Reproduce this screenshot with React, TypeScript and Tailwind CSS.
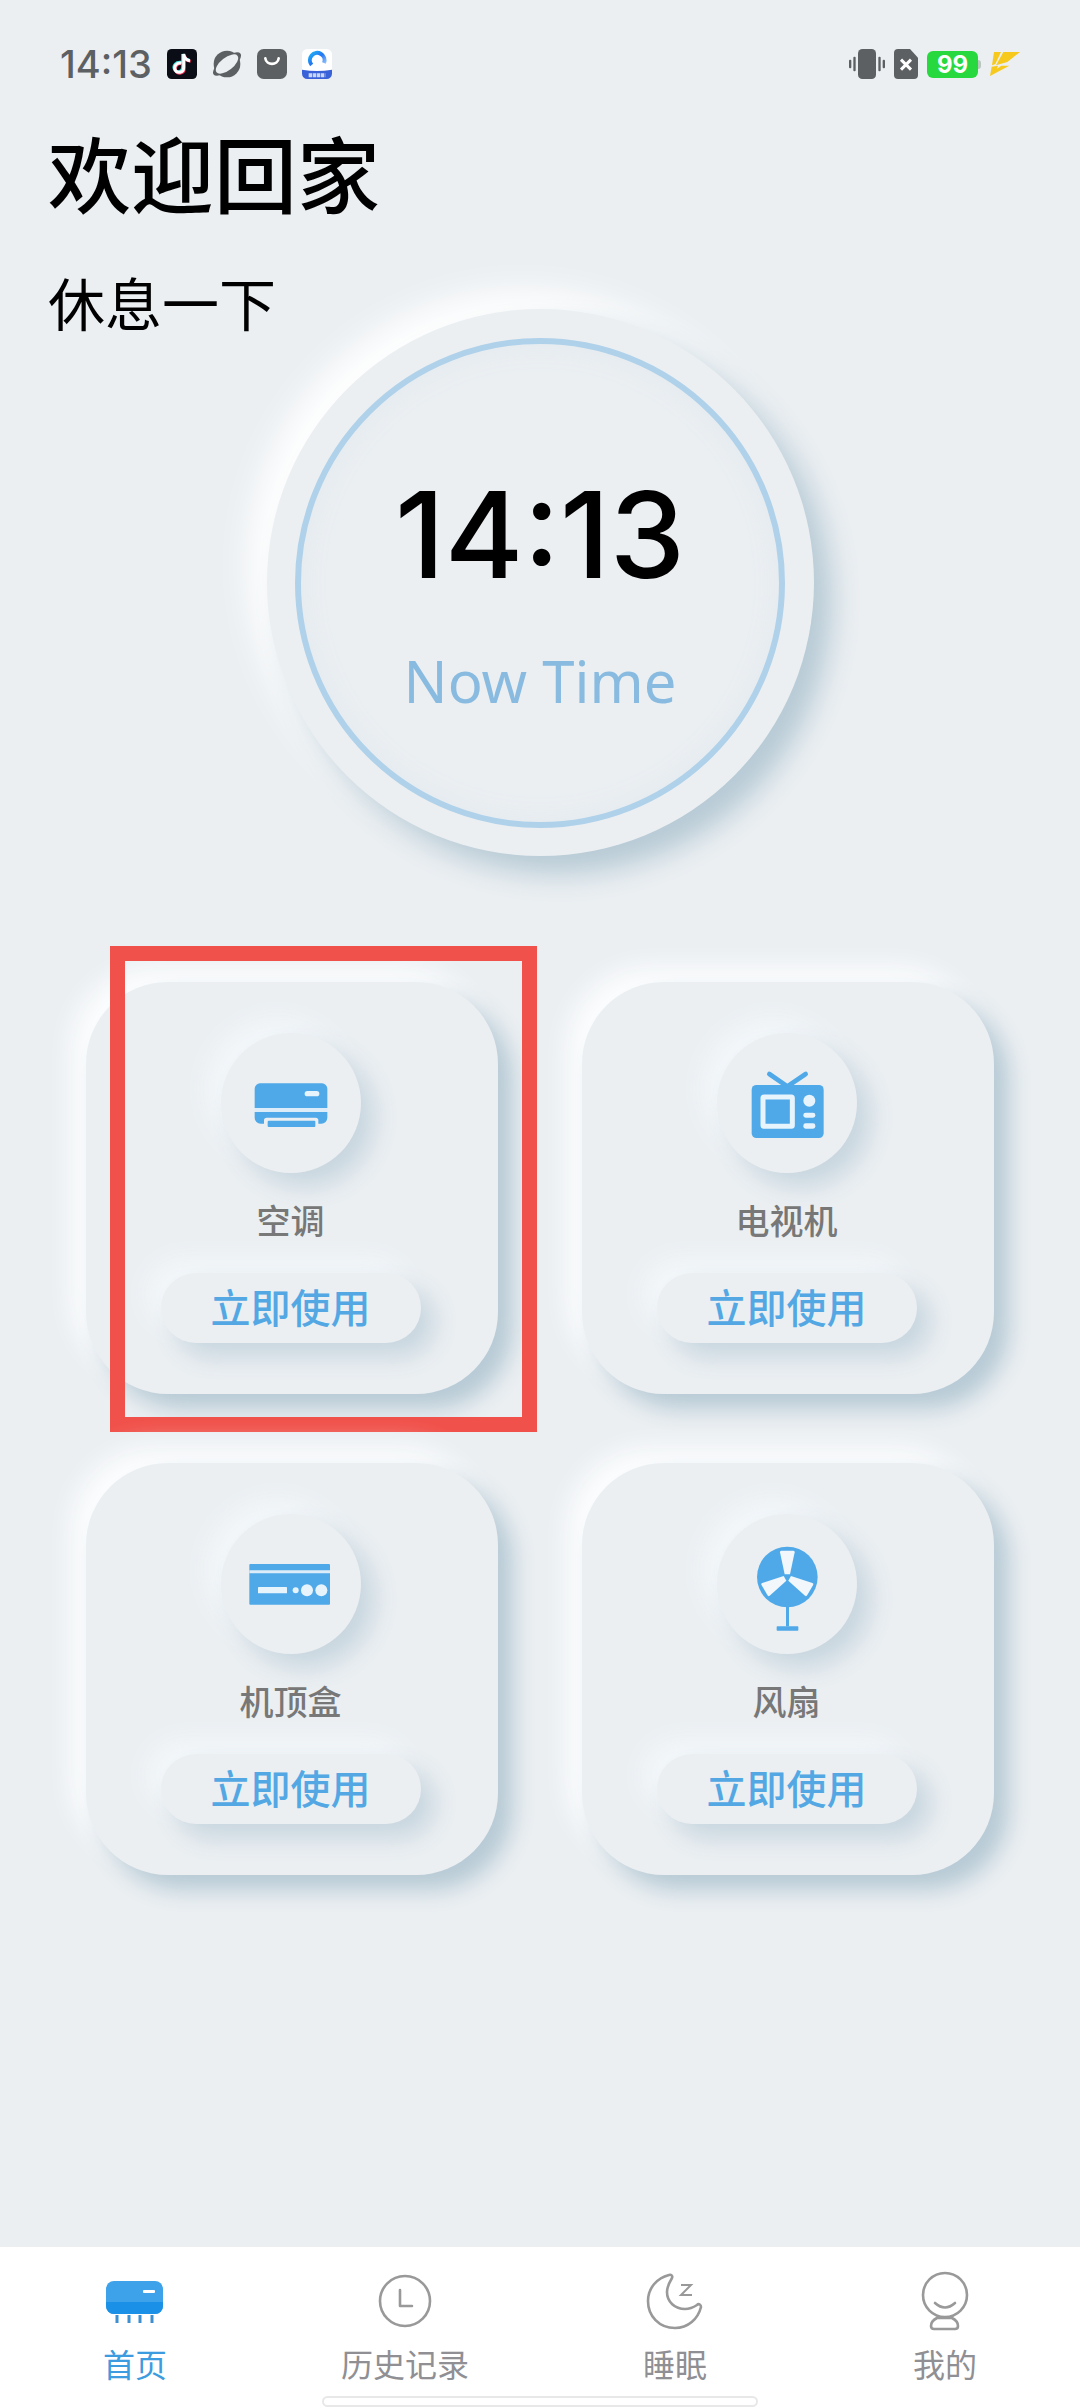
import React from "react";

const SANS = "font-['Noto_Sans','Noto_Sans_CJK_SC',sans-serif]";

interface Device {
  name: string;
  icon: React.FC;
  highlighted?: boolean;
}

interface NavItem {
  label: string;
  icon: React.FC;
  active?: boolean;
}

/* ---------- device icons ---------- */

const AirConditioner: React.FC = () => (
  <svg viewBox="0 0 300 300" className="size-[100px]" fill="#4fa9e8">
    <path d="M41 165V107a16 16 0 0 1 16-16H243a16 16 0 0 1 16 16V165Z" />
    <rect x="191" y="114" width="44" height="16" rx="8" fill="#e8f4fc" />
    <path d="M41 165H259V177H41Z" fill="#dcecf8" />
    <path d="M41 177H259V194a18 18 0 0 1-18 18H232V202a8 8 0 0 0-8-8H77a8 8 0 0 0-8 8V212H59a18 18 0 0 1-18-18Z" />
    <rect x="80" y="203" width="143" height="19" rx="3" />
  </svg>
);

const Television: React.FC = () => (
  <svg viewBox="0 0 300 300" className="size-[100px]" fill="#4fa9e8">
    <path d="M97 63 151 100 206 63" fill="none" stroke="#4fa9e8" strokeWidth="14" strokeLinecap="round" />
    <rect x="44" y="96" width="216" height="159" rx="14" />
    <rect x="78" y="132" width="88" height="88" rx="3" fill="none" stroke="#e8f4fc" strokeWidth="15" />
    <circle cx="217" cy="143" r="18" fill="#e8f4fc" />
    <rect x="199" y="179" width="36" height="15" rx="7" fill="#e8f4fc" />
    <rect x="199" y="211" width="36" height="16" rx="7" fill="#e8f4fc" />
  </svg>
);

const SetTopBox: React.FC = () => (
  <svg viewBox="0 0 300 300" className="size-[100px]" fill="#4fa9e8">
    <rect x="25" y="90" width="242" height="122" rx="3" />
    <path d="M25 109H267V118H25Z" fill="#dcecf8" />
    <rect x="51" y="159" width="87" height="19" rx="2" fill="#e8f4fc" />
    <circle cx="164" cy="169" r="9" fill="#e8f4fc" />
    <circle cx="198" cy="169" r="18" fill="#e8f4fc" />
    <circle cx="241" cy="169" r="18" fill="#e8f4fc" />
  </svg>
);

const FAN_BLADE = "M133 50H169Q174 50 173 55L159 121H143L129 55Q128 50 133 50Z";

const Fan: React.FC = () => (
  <svg viewBox="0 0 300 300" className="size-[100px]" fill="#4fa9e8">
    <circle cx="151" cy="129" r="91" />
    <g fill="#f2f7fb">
      <path d={FAN_BLADE} />
      <path d={FAN_BLADE} transform="rotate(120 151 129)" />
      <path d={FAN_BLADE} transform="rotate(240 151 129)" />
    </g>
    <circle cx="151" cy="129" r="6" />
    <path d="M147 218H156V277H147Z" />
    <rect x="119" y="277" width="65" height="13" rx="2" />
  </svg>
);

/* ---------- nav icons ---------- */

const HomeIcon: React.FC = () => (
  <svg viewBox="0 0 60 60" className="size-[60px]">
    <rect x="1" y="10" width="57" height="33" rx="8" fill="#3da2e9" />
    <path d="M1 31H58V35a8 8 0 0 1-8 8H9a8 8 0 0 1-8-8Z" fill="#1a91e6" />
    <rect x="38" y="19" width="12" height="3" rx="1" fill="#fff" />
    <path d="M12 44V52M24 44V52M35 44V52M47 44V52" stroke="#3d8fd0" strokeWidth="3" />
  </svg>
);

const ClockIcon: React.FC = () => (
  <svg viewBox="0 0 60 60" className="size-[60px]" fill="none" stroke="#999" strokeWidth="2.6">
    <circle cx="30" cy="30" r="25" />
    <path d="M25 19V35H37" strokeLinecap="round" strokeLinejoin="round" />
  </svg>
);

const MoonIcon: React.FC = () => (
  <svg viewBox="0 0 60 60" className="size-[60px]" fill="none" stroke="#999" strokeWidth="2.6">
    <path d="M24 4C26 3 28 5 27 7C24 12 22 16 22 21C22 31 30 38 40 38C45 38 49 36 52 34C54 32 56 34 56 36C53 48 43 57 30 57C14 57 3 45 3 30C3 17 12 7 24 4Z" />
    <path d="M36 14H46L36 24H47" strokeWidth="2" />
  </svg>
);

const ProfileIcon: React.FC = () => (
  <svg viewBox="0 0 60 60" className="size-[60px]" fill="none" stroke="#999" strokeWidth="2.6">
    <circle cx="30" cy="24" r="22" />
    <path d="M20 32Q30 41 40 32" strokeLinecap="round" />
    <path d="M22 47H37Q43 50 43 55Q43 58 40 58H19Q16 58 16 55Q16 50 22 47Z" />
  </svg>
);

/* ---------- status bar ---------- */

const StatusBar: React.FC = () => (
  <div className="flex items-center justify-between px-[60px] pt-[49px]">
    <div className="flex items-center gap-[15px]">
      <span className="font-['Inter',sans-serif] text-[38px] leading-[30px] font-medium text-[#5d6062]">14:13</span>
      <svg viewBox="0 0 90 90" className="size-[30px]">
        <rect width="90" height="90" rx="14" fill="#0a0c16" />
        <g fill="none" strokeWidth="9">
          <path d="M42 40C26 38 18 50 22 60C28 74 47 70 47 54V15C49 26 58 32 67 33" stroke="#35e0dc" />
          <path d="M46 44C30 42 23 54 26 64C32 78 52 74 52 58V18C54 29 62 36 71 37" stroke="#f2305a" />
          <path d="M44 42C28 40 21 52 24 62C30 75 50 71 50 56V15C52 27 60 34 69 35" stroke="#fff" />
        </g>
      </svg>
      <svg viewBox="0 0 90 90" className="size-[30px]">
        <circle cx="45" cy="45" r="40" fill="#5d6062" />
        <ellipse cx="45" cy="45" rx="51" ry="20" transform="rotate(-38 45 45)" fill="#5d6062" />
        <ellipse cx="45" cy="45" rx="40" ry="19" transform="rotate(-38 45 45)" fill="#ebeff2" />
      </svg>
      <svg viewBox="0 0 90 90" className="size-[30px]">
        <rect width="90" height="90" rx="20" fill="#5d6062" />
        <path d="M25 28C28 50 62 50 65 28" fill="none" stroke="#fff" strokeWidth="8" strokeLinecap="round" />
      </svg>
      <svg viewBox="0 0 90 90" className="size-[30px]">
        <defs>
          <linearGradient id="arc" x1="0" y1="0" x2="1" y2="1">
            <stop offset="0" stopColor="#1fb0f5" />
            <stop offset="0.5" stopColor="#2477f2" />
            <stop offset="1" stopColor="#9cc8fb" />
          </linearGradient>
        </defs>
        <rect width="90" height="90" rx="16" fill="#fff" />
        <path d="M0 62Q45 70 90 62V74a16 16 0 0 1-16 16H16a16 16 0 0 1-16-16Z" fill="#3a62d8" />
        <path d="M29 48A22 22 0 1 1 66 42" fill="none" stroke="url(#arc)" strokeWidth="12" />
        <path d="M20 79H70" stroke="#c9d6fa" strokeWidth="12" strokeDasharray="10 2" />
      </svg>
    </div>

    <div className="flex items-center gap-[9px]">
      <svg viewBox="0 0 108 90" className="h-[30px] w-[36px]" fill="#5d6062">
        <rect x="27" width="54" height="90" rx="13" />
        <rect x="13" y="23" width="7" height="44" rx="3" />
        <rect x="0" y="32" width="7" height="26" rx="3" />
        <rect x="88" y="23" width="7" height="44" rx="3" />
        <rect x="101" y="32" width="7" height="26" rx="3" />
      </svg>
      <svg viewBox="0 0 72 90" className="h-[30px] w-[24px]">
        <path d="M12 0H48L72 26V78a12 12 0 0 1-12 12H12A12 12 0 0 1 0 78V12A12 12 0 0 1 12 0Z" fill="#5d6062" />
        <path d="M21 32 51 62M51 32 21 62" stroke="#fff" strokeWidth="9" />
      </svg>
      <div className="flex items-center">
        <span className="flex h-[27px] w-[51px] items-center justify-center rounded-md bg-[#27d83f] font-['Inter',sans-serif] text-[24px] leading-[27px] font-bold text-white">
          99
        </span>
        <span className="h-[9px] w-[3px] rounded-r-sm bg-[#b9c6bd]" />
      </div>
      <svg viewBox="0 0 90 72" className="h-[24px] w-[30px]" fill="#f7c91c">
        <path d="M12 0H33L16 36L6 40Z" />
        <path d="M40 0H90L52 30L18 40Z" />
        <path d="M5 44L24 41L21 50L34 41H58L0 72Z" />
      </svg>
    </div>
  </div>
);

/* ---------- content ---------- */

const Dial: React.FC = () => (
  <div className="mx-auto -mt-[27px] flex size-[547px] items-center justify-center rounded-full bg-[#ebeff2] shadow-[18px_18px_28px_#b7cad5,-18px_-18px_36px_#ffffff]">
    <div className="flex size-[490px] flex-col items-center justify-center rounded-full border-[6px] border-[#b0d1ea] pt-[20px] shadow-[inset_0_0_30px_#e2e9ee]">
      <time className="font-['Inter',sans-serif] text-[120px] leading-[140px] font-medium text-black">14:13</time>
      <span className="mt-[36px] text-[58px] leading-[80px] text-[#89bbe0]">Now Time</span>
    </div>
  </div>
);

const DeviceCard: React.FC<{ device: Device }> = ({ device }) => {
  const Icon = device.icon;
  return (
    <article className="relative flex w-[412px] flex-col items-center rounded-[82px] bg-[#ebeff2] py-[51px] pr-[3px] shadow-[15px_15px_22px_#b7cad5,-15px_-15px_26px_#fcfdfe]">
      <div className="flex size-[140px] items-center justify-center rounded-full bg-[#ebeff2] shadow-[14px_14px_24px_#c8d6df,-14px_-14px_24px_#f3f7fa]">
        <Icon />
      </div>
      <h2 className="mt-[24px] text-[34px] leading-[48px] font-medium text-[#777]">{device.name}</h2>
      <button className="mt-[28px] h-[70px] w-[260px] rounded-full bg-[#ebeff2] text-[40px] leading-[70px] font-medium text-[#53a8e4] shadow-[14px_14px_24px_#c8d6df,-14px_-14px_24px_#f3f7fa]">
        立即使用
      </button>
      {device.highlighted && (
        <div className="pointer-events-none absolute -top-[36px] left-[24px] h-[486px] w-[427px] border-[15px] border-[#f0524b]" />
      )}
    </article>
  );
};

const devices: Device[] = [
  { name: "空调", icon: AirConditioner, highlighted: true },
  { name: "电视机", icon: Television },
  { name: "机顶盒", icon: SetTopBox },
  { name: "风扇", icon: Fan },
];

const navItems: NavItem[] = [
  { label: "首页", icon: HomeIcon, active: true },
  { label: "历史记录", icon: ClockIcon },
  { label: "睡眠", icon: MoonIcon },
  { label: "我的", icon: ProfileIcon },
];

const BottomNav: React.FC = () => (
  <nav className="relative mt-auto grid grid-cols-4 bg-white pt-[24px] pb-[23px]">
    {navItems.map(({ label, icon: Icon, active }) => (
      <a key={label} href="#" className="flex flex-col items-center gap-[14px]">
        <Icon />
        <span className={active ? "text-[32px] leading-[40px] text-[#3d9be0]" : "text-[32px] leading-[40px] text-[#8f8f94]"}>
          {label}
        </span>
      </a>
    ))}
    {/* Gesture bar */}
    <div className="absolute bottom-[1px] left-1/2 h-[11px] w-[436px] -translate-x-1/2 rounded-full border-2 border-[#e8e8e8] bg-white" />
  </nav>
);

export default function App() {
  return (
    <div className={`flex min-h-screen flex-col bg-[#ebeff2] ${SANS}`}>
      <StatusBar />
      <header className="px-[48px] pt-[48px] text-black">
        <h1 className="text-[83px] leading-[96px] font-medium">欢迎回家</h1>
        <p className="mt-[49px] text-[57px] leading-[64px]">休息一下</p>
      </header>
      <Dial />
      <main className="mt-[126px] flex flex-wrap justify-between gap-y-[69px] px-[86px]">
        {devices.map((device) => (
          <DeviceCard key={device.name} device={device} />
        ))}
      </main>
      <BottomNav />
    </div>
  );
}
